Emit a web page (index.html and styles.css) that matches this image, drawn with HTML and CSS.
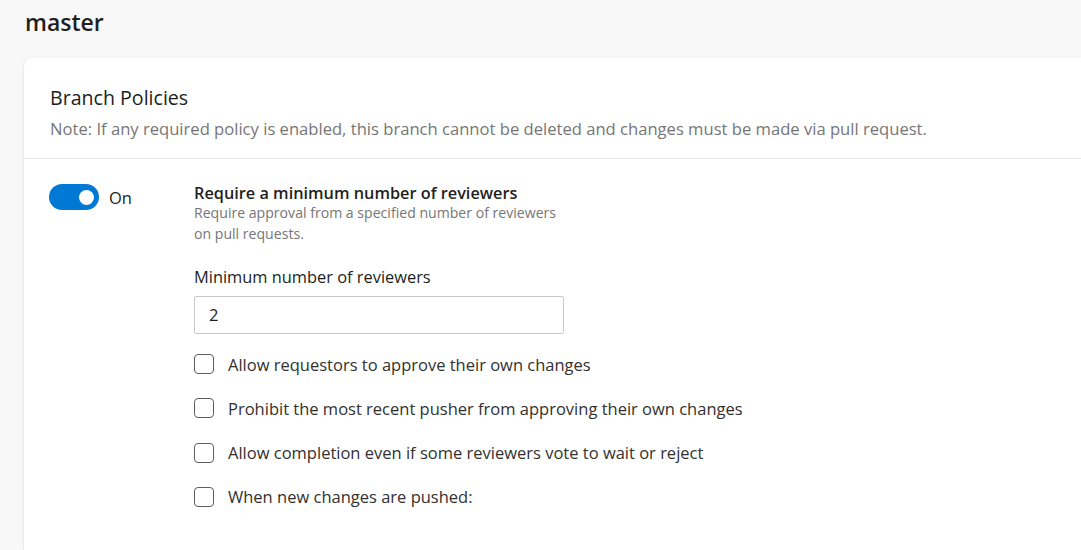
FILE: index.html
```html
<!DOCTYPE html>
<html>
<head>
<meta charset="utf-8">
<link rel="stylesheet" href="styles.css">
</head>
<body>
<div class="page">
  <h1 class="branch">master</h1>
  <div class="card">
    <div class="card-head">
      <div class="card-title">Branch Policies</div>
      <div class="card-note">Note: If any required policy is enabled, this branch cannot be deleted and changes must be made via pull request.</div>
    </div>
    <div class="policy">
      <div class="toggle-col">
        <span class="toggle"><span class="knob"></span></span>
        <span class="toggle-label">On</span>
      </div>
      <div class="policy-body">
        <div class="policy-title">Require a minimum number of reviewers</div>
        <div class="policy-desc">Require approval from a specified number of reviewers<br>on pull requests.</div>
        <div class="field-label">Minimum number of reviewers</div>
        <div class="input">2</div>
        <ul class="checks">
          <li><span class="box"></span>Allow requestors to approve their own changes</li>
          <li><span class="box"></span>Prohibit the most recent pusher from approving their own changes</li>
          <li><span class="box"></span>Allow completion even if some reviewers vote to wait or reject</li>
          <li><span class="box"></span>When new changes are pushed:</li>
        </ul>
      </div>
    </div>
  </div>
</div>
</body>
</html>
```
FILE: styles.css
```css
html, body {
  margin: 0;
  padding: 0;
  background: #f8f8f8;
  font-family: "Open Sans", "Noto Sans", sans-serif;
  color: #201f1e;
  overflow: hidden;
}
.page {
  padding: 0 0 0 24px;
  height: 550px;
  box-sizing: border-box;
  display: flex;
  flex-direction: column;
}
.branch {
  margin: 0;
  padding: 7px 0 0 1px;
  height: 52px;
  box-sizing: border-box;
  font-size: 23px;
  font-weight: 600;
  line-height: 30px;
  color: #1f1f1f;
  flex: none;
}
.card {
  background: #fff;
  border-radius: 8px 0 0 0;
  box-shadow: 0 1px 3px rgba(0,0,0,0.12), 0 0 1px rgba(0,0,0,0.1);
  margin-top: 6px;
  flex: 1;
  min-height: 0;
  overflow: hidden;
}
.card-head {
  padding: 26px 26px 0 26px;
  height: 101px;
  box-sizing: border-box;
  border-bottom: 1px solid #e8e8e8;
}
.card-title {
  font-size: 19.6px;
  line-height: 28px;
  color: #201f1e;
}
.card-note {
  margin-top: 5px;
  font-size: 16.6px;
  line-height: 24px;
  color: #767676;
}
.policy {
  display: flex;
  padding: 25px 0 0 25px;
}
.toggle-col {
  width: 145px;
  display: flex;
  align-items: flex-start;
  gap: 10px;
}
.toggle {
  width: 50px;
  height: 26px;
  border-radius: 13px;
  background: #0078d4;
  display: flex;
  align-items: center;
  justify-content: flex-end;
  padding-right: 5px;
  box-sizing: border-box;
}
.knob {
  width: 15px;
  height: 15px;
  border-radius: 50%;
  background: #fff;
}
.toggle-label {
  font-size: 16.5px;
  line-height: 28px;
  color: #201f1e;
}
.policy-body {
  display: flex;
  flex-direction: column;
  margin-top: -2px;
}
.policy-title {
  font-size: 16.3px;
  font-weight: 600;
  line-height: 22px;
  color: #1f1f1f;
}
.policy-desc {
  font-size: 14.1px;
  line-height: 21px;
  color: #767676;
  margin-top: -2px;
}
.field-label {
  margin-top: 22px;
  font-size: 16.4px;
  line-height: 22px;
  color: #201f1e;
}
.input {
  margin-top: 8px;
  width: 370px;
  height: 38px;
  box-sizing: border-box;
  border: 1px solid #c8c8c8;
  border-radius: 2px;
  padding-left: 14px;
  font-size: 16.5px;
  line-height: 36px;
  color: #201f1e;
}
.checks {
  list-style: none;
  margin: 19px 0 0 0;
  padding: 0;
  display: flex;
  flex-direction: column;
  gap: 22.3px;
}
.checks li {
  display: flex;
  align-items: center;
  height: 22px;
  font-size: 16.5px;
  color: #323130;
}
.box {
  width: 18px;
  height: 18px;
  border: 1px solid #605e5c;
  border-radius: 4px;
  margin-right: 14px;
  flex: none;
}
```
